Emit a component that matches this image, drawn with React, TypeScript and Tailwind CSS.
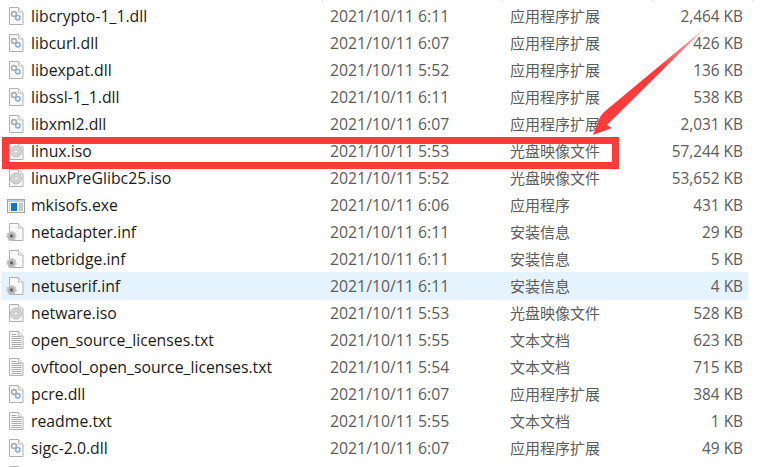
import React from 'react';

type Kind = 'dll' | 'iso' | 'exe' | 'inf' | 'txt';

const files: { name: string; date: string; type: string; size: string; kind: Kind; hot?: boolean }[] = [
  { name: 'libcrypto-1_1.dll', date: '2021/10/11 6:11', type: '应用程序扩展', size: '2,464 KB', kind: 'dll' },
  { name: 'libcurl.dll', date: '2021/10/11 6:07', type: '应用程序扩展', size: '426 KB', kind: 'dll' },
  { name: 'libexpat.dll', date: '2021/10/11 5:52', type: '应用程序扩展', size: '136 KB', kind: 'dll' },
  { name: 'libssl-1_1.dll', date: '2021/10/11 6:11', type: '应用程序扩展', size: '538 KB', kind: 'dll' },
  { name: 'libxml2.dll', date: '2021/10/11 6:07', type: '应用程序扩展', size: '2,031 KB', kind: 'dll' },
  { name: 'linux.iso', date: '2021/10/11 5:53', type: '光盘映像文件', size: '57,244 KB', kind: 'iso' },
  { name: 'linuxPreGlibc25.iso', date: '2021/10/11 5:52', type: '光盘映像文件', size: '53,652 KB', kind: 'iso' },
  { name: 'mkisofs.exe', date: '2021/10/11 6:06', type: '应用程序', size: '431 KB', kind: 'exe' },
  { name: 'netadapter.inf', date: '2021/10/11 6:11', type: '安装信息', size: '29 KB', kind: 'inf' },
  { name: 'netbridge.inf', date: '2021/10/11 6:11', type: '安装信息', size: '5 KB', kind: 'inf' },
  { name: 'netuserif.inf', date: '2021/10/11 6:11', type: '安装信息', size: '4 KB', kind: 'inf', hot: true },
  { name: 'netware.iso', date: '2021/10/11 5:53', type: '光盘映像文件', size: '528 KB', kind: 'iso' },
  { name: 'open_source_licenses.txt', date: '2021/10/11 5:55', type: '文本文档', size: '623 KB', kind: 'txt' },
  { name: 'ovftool_open_source_licenses.txt', date: '2021/10/11 5:54', type: '文本文档', size: '715 KB', kind: 'txt' },
  { name: 'pcre.dll', date: '2021/10/11 6:07', type: '应用程序扩展', size: '384 KB', kind: 'dll' },
  { name: 'readme.txt', date: '2021/10/11 5:55', type: '文本文档', size: '1 KB', kind: 'txt' },
  { name: 'sigc-2.0.dll', date: '2021/10/11 6:07', type: '应用程序扩展', size: '49 KB', kind: 'dll' },
];

const FileIcon = ({ kind }: { kind: Kind }) => {
  if (kind === 'exe') {
    return (
      <svg width="20" height="20" viewBox="0 0 20 20" className="shrink-0">
        <rect x="1.5" y="3.5" width="17" height="13" fill="#f6f6f6" stroke="#a3a3a3" />
        <rect x="2" y="4" width="16" height="2" fill="#c4ceda" />
        <rect x="5" y="7" width="6" height="8" fill="#0a78d7" />
        <path d="M3 8h1M3 10h1M3 12h1M3 14h1M13 8h4M13 10h4M13 12h4M13 14h4" stroke="#9a9a9a" />
      </svg>
    );
  }
  return (
    <svg width="20" height="20" viewBox="0 0 20 20" className="shrink-0">
      <path d="M3.5 .5H12.5L17 5V17.5H3.5Z" fill="#f9f9f9" stroke="#b0b0b0" />
      <path d="M12.5 .5V5H17" fill="#efefef" stroke="#c2c2c2" />
      {kind === 'dll' && (
        <g fill="none">
          <circle cx="8" cy="7" r="2.4" stroke="#adadad" strokeWidth="1.6" />
          <circle cx="11.8" cy="10.8" r="2.2" stroke="#7fb2d8" strokeWidth="1.5" />
        </g>
      )}
      {kind === 'iso' && (
        <g>
          <circle cx="10" cy="9.5" r="5.5" fill="#d4d4d4" stroke="#bcbcbc" />
          <circle cx="10" cy="9.5" r="1.8" fill="#f6f6f6" stroke="#a8a8a8" strokeWidth=".5" />
        </g>
      )}
      {kind === 'txt' && <path d="M5.5 3.5h5M5.5 5.5h10M5.5 7.5h10M5.5 9.5h10M5.5 11.5h10M5.5 13.5h10M5.5 15.5h10" stroke="#ababab" />}
      {kind === 'inf' && (
        <g>
          <circle cx="5.5" cy="13" r="4.2" fill="#b4b4b4" stroke="#c6c6c6" strokeWidth="2" strokeDasharray="1.6 1.2" />
          <circle cx="5.5" cy="13" r="1.4" fill="#555555" />
        </g>
      )}
    </svg>
  );
};

export default function App() {
  return (
    <div className="relative h-[467px] w-[774px] overflow-hidden bg-white pt-[3px] font-['Open_Sans','Noto_Sans_CJK_SC',sans-serif]">
      <div className="absolute left-[322px] top-0 h-[2px] w-px bg-[#e5e5e5]" />
      <div className="absolute left-[502px] top-0 h-[2px] w-px bg-[#e5e5e5]" />
      <div className="absolute left-[652px] top-0 h-[2px] w-px bg-[#e5e5e5]" />
      <div className="absolute left-[752px] top-0 h-[2px] w-px bg-[#e5e5e5]" />
      <div className="flex w-[748px] flex-col">
        {files.map((f) => (
          <div
            key={f.name}
            className={`ml-px flex shrink-0 items-center ${f.hot ? '-mt-px h-[28px] bg-[#e5f3ff] pt-px' : 'h-[27px]'}`}
          >
            <div className="flex w-[329px] items-center gap-[5px] pl-[5px] text-[15.8px] text-[#1a1a1a]">
              <FileIcon kind={f.kind} />
              <span className="whitespace-nowrap">{f.name}</span>
            </div>
            <div className="w-[180px] text-[15.8px] text-[#5c5c5c]">{f.date}</div>
            <div className="w-[130px] text-[15px] text-[#5c5c5c]">{f.type}</div>
            <div className="w-[103px] text-right text-[15.4px] text-[#5c5c5c]">{f.size}</div>
          </div>
        ))}
        <div className="ml-px flex h-[27px] shrink-0 items-center pl-[5px]">
          <FileIcon kind="dll" />
        </div>
      </div>
      <div className="absolute left-[2px] top-[137px] h-[32px] w-[617px] border-[7px] border-[#fe3a3a]" />
      <svg className="absolute left-0 top-0" width="774" height="467" viewBox="0 0 774 467">
        <defs>
          <linearGradient id="tail" x1="705" y1="28" x2="660" y2="70" gradientUnits="userSpaceOnUse">
            <stop offset="0" stopColor="#fe3a3a" stopOpacity=".35" />
            <stop offset="1" stopColor="#fe3a3a" />
          </linearGradient>
        </defs>
        <path d="M705 28L604 112L600 117L593 135L612 128L607 125Z" fill="url(#tail)" />
      </svg>
    </div>
  );
}
